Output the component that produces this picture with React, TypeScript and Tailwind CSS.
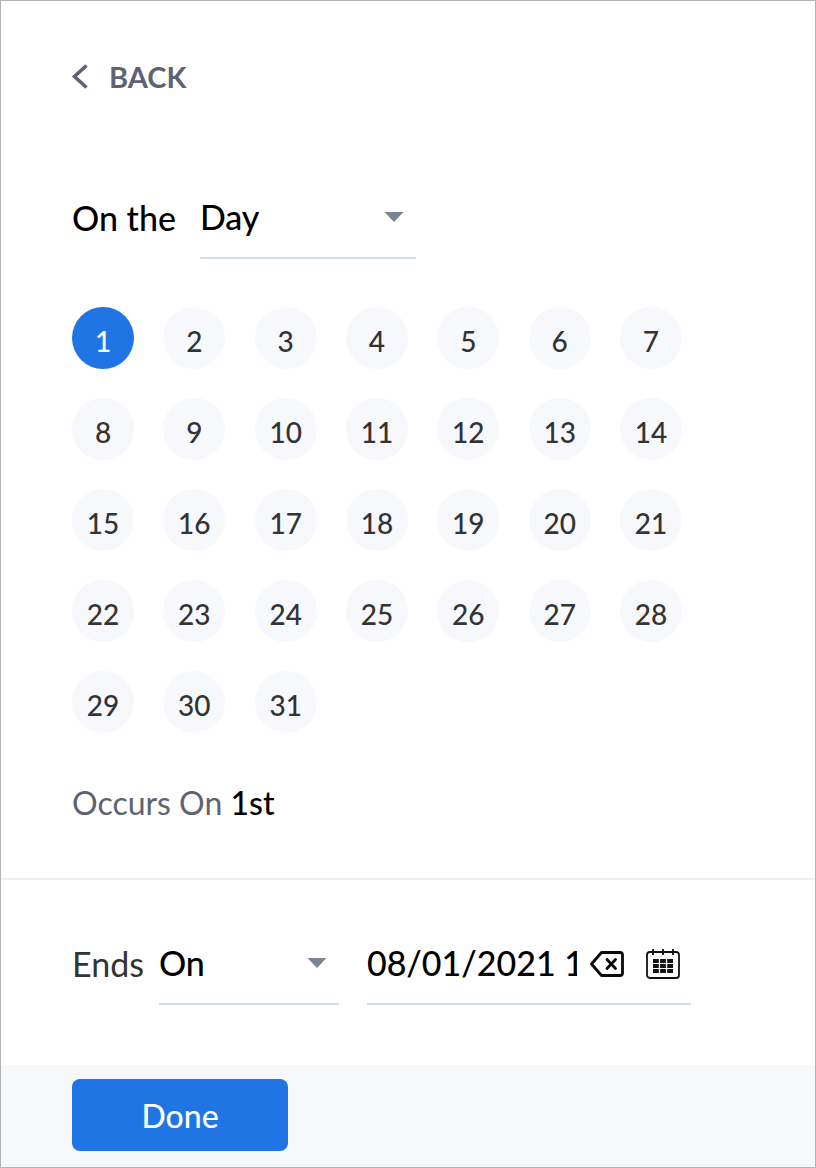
import React, { useState } from 'react';

const days = Array.from({ length: 31 }, (_, i) => i + 1);

const ordinal = (n: number) => {
  const suffixes = ['th', 'st', 'nd', 'rd'];
  const rest = n % 100;
  return n + (suffixes[(rest - 20) % 10] || suffixes[rest] || suffixes[0]);
};

interface DropdownProps {
  id: string;
  options: string[];
  className: string;
}

function Dropdown({ id, options, className }: DropdownProps) {
  return (
    <div className={`relative ${className}`}>
      <select
        id={id}
        className="block w-full h-20 pb-1 appearance-none bg-transparent border-b-2 border-[#d3dcea] text-[34px] font-medium text-black outline-none"
      >
        {options.map((option) => (
          <option key={option}>{option}</option>
        ))}
      </select>
      <svg
        className="absolute right-3 top-8 w-5 h-3 pointer-events-none"
        viewBox="0 0 20 12"
        fill="#7b8494"
        aria-hidden="true"
      >
        <path d="M0.5 1h19L10 11z" />
      </svg>
    </div>
  );
}

function ClearIcon() {
  return (
    <svg className="w-9 h-8" viewBox="0 0 36 32" fill="none" stroke="#0a0a0a" strokeWidth="2.8" strokeLinecap="round" strokeLinejoin="round">
      <path d="M12.5 4.5H31a2.5 2.5 0 0 1 2.5 2.5v18a2.5 2.5 0 0 1-2.5 2.5H12.5L2.5 16z" />
      <path d="M18 11.5l8.5 9M26.5 11.5l-8.5 9" />
    </svg>
  );
}

function CalendarIcon() {
  return (
    <svg className="w-9 h-8" viewBox="0 0 36 32" fill="none" stroke="#111111">
      <rect x="2" y="4" width="32" height="26" rx="3" strokeWidth="1.8" />
      <path d="M8 1v6M18 1v6M28 1v6" strokeWidth="1.8" />
      <path d="M8 13h20M8 18h20M8 23h20" strokeWidth="4" strokeDasharray="5.8 1.3" />
    </svg>
  );
}

function App() {
  const [selectedDay, setSelectedDay] = useState(1);
  const [endDate, setEndDate] = useState('08/01/2021 12:00 AM');

  return (
    <div
      className="min-h-screen flex flex-col bg-white border border-[#b3b3b3] text-black"
      style={{ fontFamily: 'Lato, "Open Sans", sans-serif' }}
    >
      {/* Header */}
      <header className="px-[70px] pt-14">
        <button type="button" className="flex items-center gap-5 h-10 text-[29px] font-bold text-[#5d6373]">
          <svg className="w-[18px] h-7" viewBox="0 0 18 28" fill="none" stroke="currentColor" strokeWidth="3.6" aria-hidden="true">
            <path d="M15.5 2.5L3.5 13.5l12 11" />
          </svg>
          BACK
        </button>
      </header>

      {/* Day of month */}
      <section className="px-[71px] pt-[82px]">
        <div className="flex items-center gap-6">
          <label htmlFor="repeat-on" className="pb-1 text-[34px] font-medium">On the</label>
          <Dropdown id="repeat-on" options={['Day', 'Weekday']} className="w-54" />
        </div>

        <div className="mt-12 grid grid-cols-[repeat(7,62px)] justify-between gap-y-[29px] max-w-[610px]">
          {days.map((day) => (
            <button
              key={day}
              type="button"
              aria-pressed={day === selectedDay}
              onClick={() => setSelectedDay(day)}
              className={`w-[62px] h-[62px] pt-1.5 rounded-full text-[28px] font-medium ${
                day === selectedDay ? 'bg-[#2075e5] text-white' : 'bg-[#f7f8fc] text-[#333333]'
              }`}
            >
              {day}
            </button>
          ))}
        </div>

        <p className="mt-[46px] pb-[51px] text-[32px] leading-12 text-[#5d6373]">
          Occurs On <span className="font-medium text-black">{ordinal(selectedDay)}</span>
        </p>
      </section>

      {/* End date */}
      <section className="flex items-center px-[71px] pt-[45px] pb-15 border-t-2 border-[#ebeef3]">
        <label htmlFor="ends" className="pb-1 text-[34px] text-[#333333]">Ends</label>
        <Dropdown id="ends" options={['On', 'Never', 'After']} className="ml-[15px] w-45" />
        <div className="ml-7 flex items-center w-[324px] h-20 border-b-2 border-[#d3dcea]">
          <input
            type="text"
            aria-label="End date"
            value={endDate}
            onChange={(e) => setEndDate(e.target.value)}
            className="w-[210px] pb-1 text-[34px] font-medium outline-none"
          />
          <button type="button" aria-label="Clear date" className="ml-3" onClick={() => setEndDate('')}>
            <ClearIcon />
          </button>
          <button type="button" aria-label="Open calendar" className="ml-5">
            <CalendarIcon />
          </button>
        </div>
      </section>

      {/* Footer */}
      <footer className="flex-1 px-[71px] pt-[14px] pb-4 bg-[#f6f8fc]">
        <button type="button" className="w-54 h-18 pt-0.5 rounded-lg bg-[#2075e5] text-[32px] font-medium text-white">
          Done
        </button>
      </footer>
    </div>
  );
}

export default App;
